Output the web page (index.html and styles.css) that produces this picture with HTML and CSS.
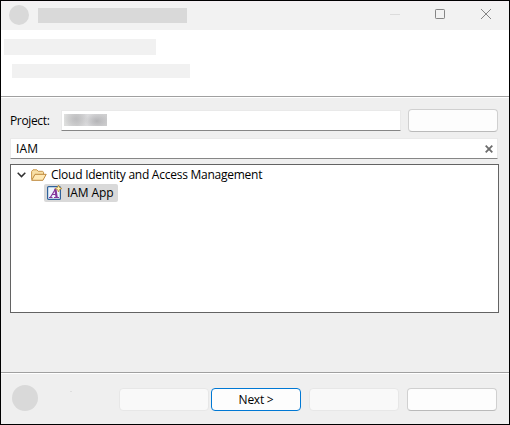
FILE: index.html
```html
<!DOCTYPE html>
<html lang="en">
<head>
<meta charset="utf-8">
<title>Wizard</title>
<link rel="stylesheet" href="styles.css">
</head>
<body>
<div class="window">
  <header class="titlebar">
    <span class="app-icon"></span>
    <span class="title"></span>
    <svg class="controls" width="102" height="12" viewBox="0 0 102 12" fill="none">
      <path d="M1 6.500h10" stroke="#dcdcdc"/>
      <rect x="46.500" y="1.500" width="9" height="9" rx=".7" stroke="#858585"/>
      <path d="M92 1l10 10M102 1L92 11" stroke="#858585"/>
    </svg>
  </header>
  <section class="banner">
    <div class="heading"></div>
    <div class="description"></div>
  </section>
  <main class="content">
    <div class="project">
      <span class="label">Project:</span>
      <div class="field project-field"><span class="redacted"></span></div>
      <button class="button"></button>
    </div>
    <div class="field filter">
      <span class="query">IAM</span>
      <svg width="8" height="8" viewBox="0 0 8 8"><path d="M.7.700l6.600 6.600M7.300.700L.7 7.300" stroke="#6c6c6c" stroke-width="1.800"/></svg>
    </div>
    <div class="tree">
      <div class="row">
        <svg class="chevron" width="9" height="6" viewBox="0 0 9 6" fill="none"><path d="M.7.800l3.800 3.800L8.300.800" stroke="#303030" stroke-width="1.500"/></svg>
        <svg class="folder" width="16" height="12" viewBox="0 0 16 12">
          <path d="M.6 10.500V2.400L2 .8h3.800l1.400 1.500h4.500l.8.900v2.300" fill="#f8dfa4" stroke="#c9974b"/>
          <path d="M.7 11.300L4 5.300h11.200l-3.300 6z" fill="#ffe9b5" stroke="#bd873b" stroke-linejoin="round"/>
        </svg>
        <span class="category">Cloud Identity and Access Management</span>
      </div>
      <div class="row selected">
        <svg width="16" height="16" viewBox="0 0 16 16">
          <rect x=".6" y="1.600" width="12.800" height="12.800" rx="1" fill="#eef6fd" stroke="#2f629c" stroke-width="1.200"/>
          <path d="M2 12.500h3.500M7 12.500h5M3.500 12.200L8.500 4M5.500 9.500h4" fill="none" stroke="#85369b" stroke-width="1.200"/>
          <path d="M8.300 3.500l1.300 8.700" stroke="#85369b" stroke-width="2.200"/>
          <path d="M11.500 0l1 2.500L15 3.500l-2.500 1-1 2.500-1-2.500L8 3.500l2.500-1z" fill="#fff2b2" stroke="#b98a35" stroke-width=".8"/>
        </svg>
        <span class="item">IAM App</span>
      </div>
    </div>
  </main>
  <footer class="footer">
    <span class="help"></span>
    <span class="speck"></span>
    <button class="button disabled"></button>
    <button class="button primary">Next &gt;</button>
    <button class="button disabled finish"></button>
    <button class="button cancel"></button>
  </footer>
</div>
</body>
</html>
```
FILE: styles.css
```css
* { box-sizing: border-box; }
body {
  margin: 0;
  font: 12px/16px "Open Sans", "Noto Sans", sans-serif;
  letter-spacing: -.25px;
  color: #000;
}
.window {
  display: flex;
  flex-direction: column;
  width: 510px;
  height: 425px;
  border: 1px solid #000;
  background: #efefef;
}
.titlebar {
  display: flex;
  height: 29px;
  padding: 4px 18px 0 8px;
  background: linear-gradient(#f5f0f4, #f2f2f2 3px);
}
.app-icon {
  width: 20px;
  height: 20px;
  border-radius: 50%;
  background: #d9d9d9;
}
.title {
  width: 149px;
  height: 15px;
  margin: 3px 0 0 9px;
  background: #d9d9d9;
}
.controls { margin: 3px 0 0 auto; }
.banner {
  height: 67px;
  padding: 9px 3px;
  border-bottom: 1px solid #a0a0a0;
  background: #fff;
}
.heading {
  width: 152px;
  height: 16px;
  background: #f1f1f1;
}
.description {
  width: 178px;
  height: 14px;
  margin: 9px 0 0 8px;
  background: #f1f1f1;
}
.content {
  height: 275px;
  padding: 12px 9px 0;
  border-top: 1px solid #fff;
}
.project {
  display: flex;
  height: 23px;
  margin-top: -1px;
}
.label {
  width: 51px;
  padding-top: 4px;
  letter-spacing: -.35px;
}
.field {
  border: 1px solid #e9e9e9;
  border-bottom-color: #868686;
  border-radius: 1px;
  background: #fff;
}
.project-field {
  width: 340px;
  height: 21px;
  margin: 1px 7px 0 0;
  padding: 3px 2px;
}
.redacted {
  display: block;
  width: 43px;
  height: 12px;
  background:
    radial-gradient(ellipse 12px 9px at 12px 5px, #bdbdbf, transparent),
    radial-gradient(ellipse 12px 8px at 33px 7px, #b4b4b7, transparent),
    linear-gradient(90deg, #dedfde, #cfcfd0 30%, #dadadc 55%, #cececf);
}
.button {
  width: 90px;
  height: 23px;
  padding: 0;
  border: 1px solid #d0d0d0;
  border-bottom-color: #bababa;
  border-radius: 4px;
  background: #fdfdfd;
  color: #000;
  font: inherit;
  letter-spacing: inherit;
}
.filter {
  display: flex;
  align-items: center;
  justify-content: space-between;
  width: 488px;
  height: 21px;
  margin-top: 6px;
  padding: 0 4px 0 5px;
}
.query { letter-spacing: .15px; }
.tree {
  width: 489px;
  height: 149px;
  margin-top: 5px;
  padding: 1px 0 0 6px;
  border: 1px solid #636363;
  background: #fff;
}
.row {
  display: flex;
  align-items: center;
  height: 18px;
}
.category,
.item { padding-bottom: 1px; }
.item { letter-spacing: -.1px; }
.folder { margin: 0 4px 0 5px; }
.selected {
  gap: 4px;
  width: 74px;
  margin-left: 27px;
  padding-left: 3px;
  border-radius: 2px;
  background: #d9d9d9;
}
.footer {
  display: flex;
  height: 52px;
  padding: 14px 0 0 11px;
  border-top: 1px solid #a0a0a0;
  box-shadow: inset 0 1px #fff;
}
.footer .button { margin-top: 1px; }
.help {
  width: 26px;
  height: 26px;
  margin-top: -2px;
  border-radius: 50%;
  background: #d9d9d9;
}
.speck {
  width: 2px;
  height: 1px;
  margin: 4px 47px 0 32px;
  background: #dedede;
}
.footer .disabled {
  border-color: #e7e7e7;
  background: #f9f9f9;
}
.footer .primary {
  margin-left: 2px;
  border-color: #0078d4;
}
.footer .finish,
.footer .cancel { margin-left: 8px; }
```
